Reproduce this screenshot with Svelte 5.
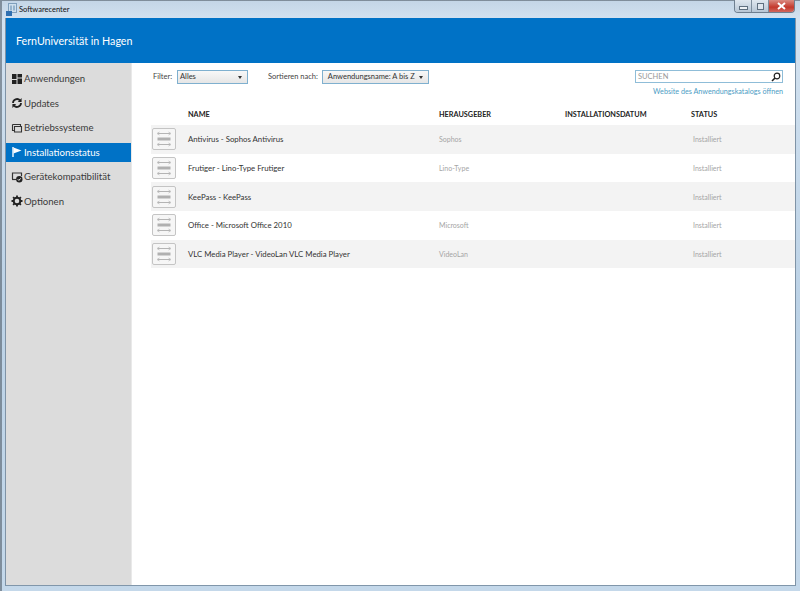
<script>
	const nav = [
		{ label: "Anwendungen", icon: "apps" },
		{ label: "Updates", icon: "updates" },
		{ label: "Betriebssysteme", icon: "os" },
		{ label: "Installationsstatus", icon: "flag", active: true },
		{ label: "Gerätekompatibilität", icon: "device" },
		{ label: "Optionen", icon: "gear" }
	];
	const rows = [
		{ name: "Antivirus - Sophos Antivirus", publisher: "Sophos" },
		{ name: "Frutiger - Lino-Type Frutiger", publisher: "Lino-Type" },
		{ name: "KeePass - KeePass", publisher: "" },
		{ name: "Office - Microsoft Office 2010", publisher: "Microsoft" },
		{ name: "VLC Media Player - VideoLan VLC Media Player", publisher: "VideoLan" }
	];
</script>

<div class="window">
	<div class="titlebar">
		<svg class="appicon" width="11" height="13" viewBox="0 0 11 13">
			<rect x="2.500" y=".5" width="8" height="9" fill="#cfe0ee" stroke="#7f9fbc"/>
			<rect x="0" y="8" width="6" height="5" fill="#2f6fb0"/>
			<path d="M5 2.500v5M8 2.500v5" stroke="#5c86ab" fill="none"/>
		</svg>
		<span class="title">Softwarecenter</span>
		<div class="winbtns">
			<div class="wb"><span class="min"></span></div>
			<div class="wb"><span class="max"></span></div>
			<div class="wb close">
				<svg width="9" height="8" viewBox="0 0 9 8"><path d="M1 1l7 6M8 1L1 7" stroke="#fff" stroke-width="2"/></svg>
			</div>
		</div>
	</div>

	<div class="client">
		<header>FernUniversität in Hagen</header>
		<div class="body">
			<nav>
				{#each nav as item}
					<div class="navitem" class:active={item.active}>
						<svg width="12" height="12" viewBox="0 0 12 12">
							{#if item.icon == "apps"}
								<path d="M1 1h4.500v5H1zM6.500 1H11v3.500H6.500zM1 7h4.500v4H1zM6.500 5.500H11V11H6.500z" fill="#222"/>
							{:else if item.icon == "updates"}
								<path d="M2 6a4 4 0 0 1 7-2.600M10 6a4 4 0 0 1-7 2.600" fill="none" stroke="#222" stroke-width="1.800"/>
								<path d="M10.600 1v4H6.800zM1.400 11V7h3.800z" fill="#222"/>
							{:else if item.icon == "os"}
								<path d="M1.500 2.500h8v2M1.500 2.500v6h2M3.500 4.500h7v5.500h-7z" fill="none" stroke="#333" stroke-width="1.100"/>
							{:else if item.icon == "flag"}
								<path d="M2 1v10" stroke="#fff" stroke-width="1.400"/>
								<path d="M2.500 1.500L10.500 4.500L2.500 7.500z" fill="#fff"/>
							{:else if item.icon == "device"}
								<path d="M1.500 8V2h9v3" fill="none" stroke="#333" stroke-width="1.200"/>
								<path d="M1 8.500h4" stroke="#333" stroke-width="1.200"/>
								<circle cx="8.300" cy="8.300" r="3.200" fill="#222"/>
								<path d="M6.800 8.300l1.100 1.100 1.800-2" fill="none" stroke="#fff"/>
							{:else}
								<circle cx="6" cy="6" r="3.300" fill="none" stroke="#222" stroke-width="2"/>
								<path d="M6 .5v2.500M6 9v2.500M.5 6H3M9 6h2.500M2.100 2.100l1.800 1.800M8.100 8.100l1.800 1.800M9.900 2.100L8.100 3.900M3.900 8.100L2.100 9.900" stroke="#222" stroke-width="1.800"/>
							{/if}
						</svg>
						<span>{item.label}</span>
					</div>
				{/each}
			</nav>

			<main>
				<div class="toolbar">
					<div class="filters">
						<span class="lbl">Filter:</span>
						<div class="select filter"><span>Alles</span><i></i></div>
						<span class="lbl sort">Sortieren nach:</span>
						<div class="select order"><span>Anwendungsname: A bis Z</span><i></i></div>
					</div>
					<div class="searchcol">
						<div class="search">
							<span>SUCHEN</span>
							<svg width="10" height="10" viewBox="0 0 10 10">
								<circle cx="6" cy="4" r="2.800" fill="none" stroke="#222" stroke-width="1.200"/>
								<path d="M4 6L1 9" stroke="#222" stroke-width="1.600"/>
							</svg>
						</div>
						<span class="link">Website des Anwendungskatalogs öffnen</span>
					</div>
				</div>

				<div class="thead">
					<span></span>
					<span>NAME</span>
					<span>HERAUSGEBER</span>
					<span>INSTALLATIONSDATUM</span>
					<span>STATUS</span>
				</div>
				{#each rows as row}
					<div class="row">
						<svg class="pkg" width="24" height="22" viewBox="0 0 24 22">
							<rect x=".5" y=".5" width="23" height="21" rx="1.500" fill="#f6f6f6" stroke="#c4c4c4"/>
							<path d="M6 5.500h12M6 16.500h12" stroke="#b4b4b4"/>
							<path d="M7.500 4L5 5.500L7.500 7M16.500 4L19 5.500L16.500 7M7.500 15L5 16.500L7.500 18M16.500 15L19 16.500L16.500 18" fill="none" stroke="#bbb" stroke-width=".8"/>
							<path d="M5.500 9.500h13v3h-13z" fill="#b0b0b0"/>
						</svg>
						<span class="name">{row.name}</span>
						<span class="muted">{row.publisher}</span>
						<span></span>
						<span class="muted status">Installiert</span>
					</div>
				{/each}
			</main>
		</div>
	</div>
</div>

<style>
	:global(body) {
		margin: 0;
	}
	.window {
		width: 800px;
		height: 591px;
		box-sizing: border-box;
		padding: 0 5px 5px 6px;
		display: flex;
		flex-direction: column;
		background: linear-gradient(180deg, #c3d5e6 0, #d3e2f0 20px, #bcd2e6 300px, #c4d8ea 100%);
		box-shadow: inset 2px 1px 0 rgba(60, 70, 80, .5);
		font-family: "Lato", "Open Sans", sans-serif;
		color: #333;
		overflow: hidden;
	}
	.titlebar {
		height: 18px;
		flex: none;
		display: flex;
		align-items: center;
		font-size: 7.500px;
		color: #111;
	}
	.appicon {
		margin-right: 2px;
	}
	.title {
		margin-top: 1px;
	}
	.winbtns {
		margin-left: auto;
		display: flex;
		height: 12px;
		align-self: flex-start;
		border: 1px solid #6e7f90;
		border-top: 0;
		border-radius: 0 0 4px 4px;
		overflow: hidden;
	}
	.wb {
		width: 16px;
		background: linear-gradient(180deg, #dfe7ef, #b7c6d5);
		border-right: 1px solid #7d8d9d;
		display: flex;
		align-items: center;
		justify-content: center;
	}
	.wb.close {
		width: 25px;
		border-right: 0;
		background: linear-gradient(180deg, #d98a80, #c4392c 60%, #d0685e);
	}
	.min {
		width: 7px;
		height: 2px;
		margin-top: 3px;
		background: #eef2f6;
		border: 1px solid #5f6f7f;
	}
	.max {
		width: 5px;
		height: 5px;
		background: #dfe6ee;
		border: 1px solid #5f6f7f;
	}
	.client {
		flex: 1;
		display: flex;
		flex-direction: column;
		border-bottom: 1px solid #8096aa;
		border-left: 1px solid #7f93a6;
		border-right: 1px solid #7f93a6;
		margin-left: -1px;
		margin-right: -1px;
		min-height: 0;
	}
	header {
		height: 45px;
		flex: none;
		box-sizing: border-box;
		background: #0072c6;
		color: #fff;
		font-size: 10.700px;
		padding: 15px 0 0 10px;
		line-height: 16px;
	}
	.body {
		flex: 1;
		display: flex;
		min-height: 0;
		background: #fff;
	}
	nav {
		width: 126px;
		flex: none;
		box-sizing: border-box;
		background: #dcdcdc;
		padding-top: 6px;
		border-right: 1px solid #e9e9e9;
	}
	.navitem {
		height: 19px;
		margin-bottom: 5.500px;
		display: flex;
		align-items: center;
		padding-left: 5px;
		gap: 1px;
		font-size: 9.600px;
		color: #3a3a3a;
	}
	.navitem.active {
		background: #0072c6;
		color: #fff;
	}
	main {
		flex: 1;
		min-width: 0;
		padding-left: 19px;
		font-size: 7.500px;
	}
	.toolbar {
		display: flex;
		justify-content: space-between;
		height: 42px;
		padding: 7px 12px 0 2px;
		box-sizing: border-box;
	}
	.filters {
		display: flex;
		align-items: flex-start;
	}
	.lbl {
		line-height: 14px;
		color: #444;
		white-space: nowrap;
	}
	.select {
		height: 14px;
		box-sizing: border-box;
		border: 1px solid #7fb0cf;
		background: linear-gradient(180deg, #f8f8f8, #e6e6e6);
		display: flex;
		align-items: center;
		justify-content: space-between;
		padding: 0 5px 0 2px;
		line-height: 12px;
		color: #333;
		white-space: nowrap;
	}
	.select i {
		width: 0;
		height: 0;
		border-left: 2.500px solid transparent;
		border-right: 2.500px solid transparent;
		border-top: 3px solid #333;
	}
	.filter {
		width: 71px;
		margin-left: 5px;
	}
	.sort {
		margin-left: 20px;
	}
	.order {
		width: 107px;
		margin-left: 4px;
		padding-left: 5px;
	}
	.searchcol {
		width: 148px;
		display: flex;
		flex-direction: column;
		align-items: flex-end;
	}
	.search {
		width: 100%;
		height: 13px;
		box-sizing: border-box;
		border: 1px solid #8fbdd8;
		display: flex;
		align-items: center;
		justify-content: space-between;
		padding: 0 1px 0 2px;
		color: #999;
	}
	.link {
		margin-top: 3px;
		line-height: 12px;
		font-size: 7.200px;
		color: #4c9cc4;
		white-space: nowrap;
	}
	.thead,
	.row {
		display: grid;
		grid-template-columns: 37px 251px 126px 126px 1fr;
		align-items: center;
	}
	.thead {
		height: 20px;
		box-sizing: border-box;
		padding-bottom: 2px;
		font-size: 7.300px;
		font-weight: 700;
		color: #222;
	}
	.row {
		height: 28.700px;
	}
	.row:nth-child(odd) {
		background: #f3f3f3;
	}
	.pkg {
		margin-left: 1px;
	}
	.name {
		font-size: 7.800px;
		color: #333;
	}
	.muted {
		color: #a5a5a5;
		font-size: 7px;
	}
	.status {
		padding-left: 2px;
	}
</style>
